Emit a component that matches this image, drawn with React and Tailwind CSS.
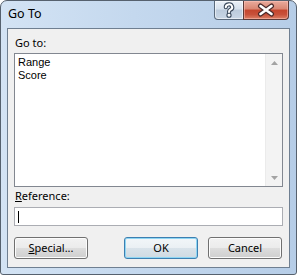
export default function App() {
  const btn =
    "w-[74px] h-[22px] rounded-[3px] border border-[#707070] flex items-center justify-center text-black shadow-[inset_0_0_0_1px_#fcfcfc] bg-[linear-gradient(to_bottom,#f2f2f2_0%,#ebebeb_50%,#dddddd_50%,#cfcfcf_100%)]";
  return (
    <div className="w-[297px] h-[275px] bg-white" style={{ fontFamily: '"Noto Sans", "Open Sans", sans-serif' }}>
      <div className="relative w-[297px] h-[275px] border border-[#56616e] rounded-t-[7px] rounded-b-[3px] px-[6px] pb-[6px] flex flex-col bg-[linear-gradient(to_right,#d3e3f4_0%,#c4d8ee_45%,#b6cde7_100%)] text-[11px] leading-[16px] text-black">
        <div className="h-[27px] pl-[1px] pt-[5px] text-[12.5px] leading-[16px]">Go To</div>

        <div className="absolute top-0 right-[7px] flex">
          <div className="w-[30px] h-[19px] rounded-bl-[4px] border border-t-0 border-[#5a6a7c] bg-[linear-gradient(to_bottom,#eaf0f7_0%,#d6e1ed_45%,#bccbdc_50%,#c9d7e6_100%)] shadow-[inset_0_0_0_1px_rgba(255,255,255,0.55)]">
            <svg width="28" height="18" viewBox="0 0 28 18">
              <g fill="none" strokeLinecap="round" strokeLinejoin="round">
                <path d="M10.8 6.2a3.2 2.8 0 1 1 4.6 2.5c-1.1 0.6-1.4 1.1-1.4 2.2" stroke="#3b4a5c" strokeWidth="4.2" />
                <circle cx="14" cy="14.2" r="0.6" stroke="#3b4a5c" strokeWidth="4" />
                <path d="M10.8 6.2a3.2 2.8 0 1 1 4.6 2.5c-1.1 0.6-1.4 1.1-1.4 2.2" stroke="#ffffff" strokeWidth="2" />
                <circle cx="14" cy="14.2" r="0.5" fill="#fff" stroke="#ffffff" strokeWidth="1.8" />
              </g>
            </svg>
          </div>
          <div className="-ml-px w-[46px] h-[19px] rounded-br-[4px] border border-t-0 border-[#5a3a38] bg-[linear-gradient(to_bottom,#e9ab9d_0%,#d98672_45%,#c4452d_50%,#c8513a_75%,#db8066_100%)] shadow-[inset_0_0_0_1px_rgba(255,200,190,0.5)]">
            <svg width="44" height="18" viewBox="0 0 44 18">
              <g strokeLinecap="round">
                <path d="M16.5 5L27.5 13M27.5 5L16.5 13" stroke="#4a2a2a" strokeWidth="5" />
                <path d="M16.5 5L27.5 13M27.5 5L16.5 13" stroke="#ffffff" strokeWidth="2.6" />
              </g>
            </svg>
          </div>
        </div>

        <div className="flex-1 border border-[#6f7f91] bg-[#f0f0f0] px-[6px] flex flex-col">
          <div className="mt-[6px] pl-[1px] h-[16px]">Go to:</div>
          <div className="mt-[2px] h-[134px] border border-[#828790] bg-white flex">
            <div
              className="flex-1 pl-[3px] pt-[2px] text-[11px] leading-[13px]"
              style={{ fontFamily: '"Liberation Sans", Arial, sans-serif' }}
            >
              <div>Range</div>
              <div>Score</div>
            </div>
            <div className="w-[17px] bg-[#f3f3f3] border-l border-[#ebebeb] flex flex-col justify-between">
              <div className="h-[17px] flex items-center justify-center">
                <svg width="7" height="4" viewBox="0 0 7 4">
                  <path d="M0 4L3.5 0L7 4Z" fill="#a3a3a3" />
                </svg>
              </div>
              <div className="h-[17px] flex items-center justify-center">
                <svg width="7" height="4" viewBox="0 0 7 4">
                  <path d="M0 0L3.5 4L7 0Z" fill="#a3a3a3" />
                </svg>
              </div>
            </div>
          </div>
          <div className="mt-[1px] pl-[1px] h-[16px]">
            <span className="underline">R</span>eference:
          </div>
          <div className="mt-[3px] h-[19px] border border-[#abadb3] bg-white flex items-center pl-[3px]">
            <div className="w-px h-[12px] bg-black" />
          </div>
          <div className="mt-[11px] flex pr-[1px]">
            <div className={btn}>
              <span>
                <span className="underline">S</span>pecial...
              </span>
            </div>
            <div className="ml-auto w-[74px] h-[22px] rounded-[3px] border border-[#3c7fb1] flex items-center justify-center text-black shadow-[inset_0_0_0_1px_#8fd6f3] bg-[linear-gradient(to_bottom,#f2f6f9_0%,#eaf0f4_50%,#d9e3ea_50%,#cfdae2_100%)]">
              OK
            </div>
            <div className={btn + " ml-[10px]"}>Cancel</div>
          </div>
        </div>
      </div>
    </div>
  );
}
